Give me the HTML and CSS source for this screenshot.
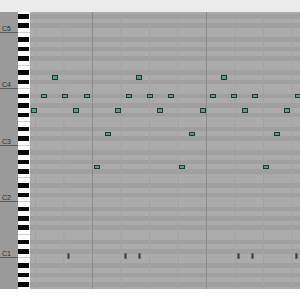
FILE: index.html
```
<!DOCTYPE html>
<html lang="en">
<head>
  <meta charset="UTF-8">
  <title>Piano Roll</title>
  <link rel="stylesheet" href="styles.css">
</head>
<body>

  <div class="topbar"></div>

  <div class="roll">
    <div class="rows" id="rows"></div>
    <div class="notes" id="notes"></div>
  </div>

  <script>
    const ROW_H = 4.71;
    const TOP_PITCH = 76;
    const names = ["C","C#","D","D#","E","F","F#","G","G#","A","A#","B"];

    // keyboard + grid rows, highest pitch first
    const rows = document.getElementById("rows");
    for (let m = TOP_PITCH; m >= 16; m--) {
      const n = m % 12;
      const row = document.createElement("div");
      row.className = "row";
      if (names[n].includes("#")) row.classList.add("black");
      if (n === 0) row.classList.add("c");
      if (n === 5) row.classList.add("f");
      const label = n === 0 ? `<span>C${Math.floor(m / 12) - 1}</span>` : "";
      row.innerHTML = `<div class="label">${label}</div><div class="key"></div><div class="cell"></div>`;
      rows.appendChild(row);
    }

    // arpeggio notes
    const notes = document.getElementById("notes");
    const pattern = [55, 58, 62, 58, 55, 58, 43, 50];
    for (let k = 0; k < 26; k++) {
      addNote("note", pattern[k % 8], 33.7 + k * 10.56 - 30, 6, 4.4);
    }

    // short hits on C1
    [68, 125, 139, 238, 252, 296].forEach(x => addNote("hit", 24, x - 30, 3, 6));

    function addNote(cls, pitch, cx, w, h) {
      const el = document.createElement("div");
      el.className = cls;
      el.style.left = (cx - w / 2) + "px";
      el.style.top = ((TOP_PITCH - pitch) * ROW_H + (ROW_H - h) / 2) + "px";
      notes.appendChild(el);
    }
  </script>

</body>
</html>
```

FILE: styles.css
```
html, body {
  margin: 0;
  background-color: #fff;
  font-family: 'Liberation Sans', Arial, sans-serif;
}

.topbar {
  height: 12px;
  background-color: #ececec;
}

.roll {
  position: relative;
  height: 277px;
  overflow: hidden;
  background-color: #a9a9a9;
}

.rows {
  margin-top: -2.88px;
  display: flex;
  flex-direction: column;
}

.row {
  display: flex;
  flex: none;
  height: 4.71px;
}

.label {
  width: 18px;
  display: flex;
  align-items: flex-end;
  background-color: #9a9a9a;
  box-sizing: border-box;
}

.label span {
  margin: 0 0 0 2px;
  font-size: 7px;
  line-height: 7px;
  color: #2e2e2e;
}

.row.c .label {
  border-bottom: 1px solid #5a5a5a;
}

.key {
  width: 12px;
  background-color: #fff;
  box-sizing: border-box;
}

.row.black .key {
  background: linear-gradient(to right, #050505 11px, #fff 11px);
}

.row.c .key,
.row.f .key {
  border-bottom: 1px solid #cfcfcf;
}

.cell {
  flex: 1;
  background-color: #ababab;
  background-image:
    linear-gradient(to right, #8c8c8c 0 1px, transparent 1px),
    linear-gradient(to right, #a2a2a2 0 1px, transparent 1px);
  background-size: 114px 100%, 28.5px 100%;
  background-position: 62px 0, 5px 0;
}

.row.black .cell {
  background-color: #a0a0a0;
}

.notes {
  position: absolute;
  left: 30px;
  right: 0;
  top: -2.88px;
  bottom: 0;
}

.note {
  position: absolute;
  width: 6px;
  height: 4.4px;
  box-sizing: border-box;
  background-color: #5f9d8b;
  border: 1px solid #1f3a33;
}

.hit {
  position: absolute;
  width: 3px;
  height: 6px;
  box-sizing: border-box;
  background-color: #3e3e3e;
  border: 1px solid #6a6a6a;
}
```
